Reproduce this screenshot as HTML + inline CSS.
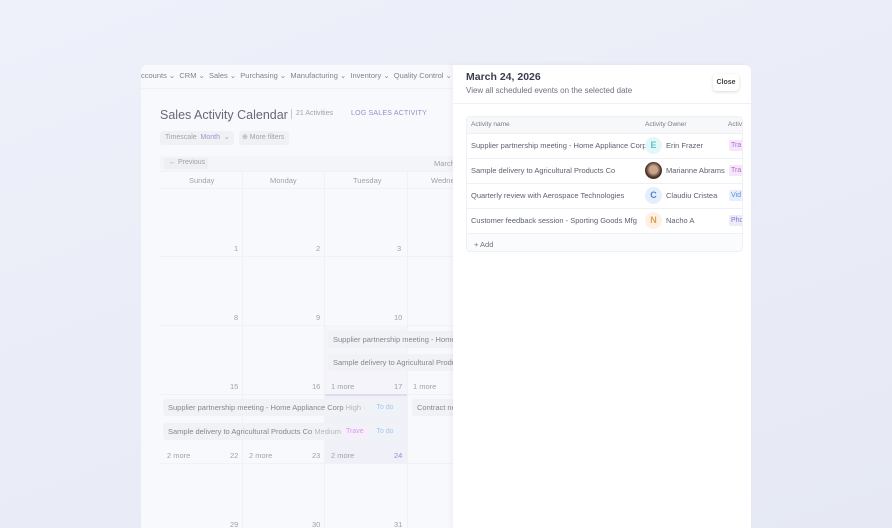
<!DOCTYPE html>
<html><head><meta charset="utf-8"><style>
*{margin:0;padding:0;box-sizing:border-box}
body{width:892px;height:528px;overflow:hidden;background:linear-gradient(160deg,#eef0fa,#e6e9f4);font-family:"Liberation Sans",sans-serif;position:relative}
.a{position:absolute;white-space:nowrap}
.app{position:absolute;left:141px;top:65px;width:320px;height:463px;background:#f8f9fc;border-radius:6px 0 0 0;overflow:hidden}
.nav{font-size:7.5px;color:#80838e}
.t{color:#a0a2ab;font-size:7.5px}
.ev{position:absolute;background:#f1f2f6;border-radius:3px;font-size:7.5px;color:#85878f;padding:0 5px;height:17px;line-height:17px;white-space:nowrap;overflow:hidden}
.drawer{position:absolute;left:453px;top:65px;width:298px;height:463px;background:#fff;border-radius:0 6px 0 0;box-shadow:-2px 0 5px rgba(120,125,150,.08)}
.row{position:absolute;left:0;width:277px;height:25px;border-top:1px solid #eef0f4;font-size:7.5px;color:#5e6270}
.av{position:absolute;width:17px;height:17px;border-radius:50%;text-align:center;line-height:17px;font-size:9px;font-weight:bold}
.tag{position:absolute;left:262px;top:6px;width:20px;height:11px;border-radius:2px;font-size:7px;line-height:11px;padding-left:2px}
</style></head><body>
<div class="app">
 <div class="a nav" style="left:0;top:6px">ccounts ⌄ &nbsp;CRM ⌄ &nbsp;Sales ⌄ &nbsp;Purchasing ⌄ &nbsp;Manufacturing ⌄ &nbsp;Inventory ⌄ &nbsp;Quality Control ⌄</div>
 <div class="a" style="left:0;top:23px;width:320px;border-top:1px solid #f1f2f6"></div>
 <div class="a" style="left:19px;top:43px;font-size:12.5px;color:#666a76">Sales Activity Calendar</div>
 <div class="a" style="left:150px;top:44px;height:10px;border-left:1px solid #c8cad3"></div>
 <div class="a t" style="left:155px;top:45px;font-size:7px">21 Activities</div>
 <div class="a" style="left:210px;top:45px;font-size:7px;color:#8f92c6;letter-spacing:.2px">LOG SALES ACTIVITY</div>
 <div class="a" style="left:19px;top:66px;width:74px;height:14px;background:#f0f1f5;border-radius:3px"></div>
 <div class="a t" style="left:24px;top:68px;font-size:7px">Timescale &nbsp;<span style="color:#9a97cf">Month</span> &nbsp;⌄</div>
 <div class="a" style="left:98px;top:66px;width:50px;height:14px;background:#f0f1f5;border-radius:3px"></div>
 <div class="a t" style="left:101px;top:68px;font-size:7px">⊕ More filters</div>
 <div class="a" style="left:19px;top:91px;width:301px;height:15px;background:#f4f5f8"></div>
 <div class="a" style="left:23px;top:93px;width:44px;height:11px;background:#eeeff3;border-radius:2px"></div>
 <div class="a t" style="left:28px;top:94px;font-size:7px">← Previous</div>
 <div class="a t" style="left:293px;top:94px">March</div>
 <div class="a t" style="left:48px;top:111px">Sunday</div>
 <div class="a t" style="left:129px;top:111px">Monday</div>
 <div class="a t" style="left:212px;top:111px">Tuesday</div>
 <div class="a t" style="left:290px;top:111px">Wednes</div>
 <div class="a" style="left:19px;top:106px;width:301px;height:357px;border-top:1px solid #f1f2f6"></div>
 <div class="a" style="left:101px;top:106px;height:357px;border-left:1px solid #f0f1f5"></div>
 <div class="a" style="left:183px;top:106px;height:357px;border-left:1px solid #f0f1f5"></div>
 <div class="a" style="left:266px;top:106px;height:357px;border-left:1px solid #f0f1f5"></div>
 <div class="a" style="left:19px;top:123px;width:301px;border-top:1px solid #f1f2f6"></div>
 <div class="a" style="left:19px;top:191px;width:301px;border-top:1px solid #f1f2f6"></div>
 <div class="a" style="left:19px;top:260px;width:301px;border-top:1px solid #f1f2f6"></div>
 <div class="a" style="left:19px;top:329px;width:301px;border-top:1px solid #f1f2f6"></div>
 <div class="a" style="left:19px;top:398px;width:301px;border-top:1px solid #f1f2f6"></div>
 <div class="a" style="left:184px;top:260px;width:82px;height:69px;background:#f4f4fa"></div>
 <div class="a" style="left:184px;top:329px;width:82px;height:2px;background:#dddcf1"></div>
 <div class="a" style="left:184px;top:331px;width:82px;height:67px;background:#f0f0f9"></div>
 <div class="a t" style="left:93px;top:179px">1</div><div class="a t" style="left:175px;top:179px">2</div><div class="a t" style="left:256px;top:179px">3</div>
 <div class="a t" style="left:93px;top:248px">8</div><div class="a t" style="left:175px;top:248px">9</div><div class="a t" style="left:253px;top:248px">10</div>
 <div class="a t" style="left:89px;top:317px">15</div><div class="a t" style="left:171px;top:317px">16</div><div class="a t" style="left:253px;top:317px">17</div>
 <div class="a t" style="left:190px;top:317px">1 more</div><div class="a t" style="left:272px;top:317px">1 more</div>
 <div class="a t" style="left:89px;top:386px">22</div><div class="a t" style="left:171px;top:386px">23</div><div class="a" style="left:253px;top:386px;font-size:7.5px;color:#8f8dd0">24</div>
 <div class="a t" style="left:26px;top:386px">2 more</div><div class="a t" style="left:108px;top:386px">2 more</div><div class="a t" style="left:190px;top:386px">2 more</div>
 <div class="a t" style="left:89px;top:455px">29</div><div class="a t" style="left:171px;top:455px">30</div><div class="a t" style="left:253px;top:455px">31</div>
 <div class="ev" style="left:187px;top:266px;width:133px">Supplier partnership meeting - Home Appliance Corp</div>
 <div class="ev" style="left:187px;top:289px;width:133px">Sample delivery to Agricultural Products Co</div>
 <div class="ev" style="left:22px;top:334px;width:237px">Supplier partnership meeting - Home Appliance Corp <span style="color:#b5b7c0">High ·</span></div>
 <div class="a" style="left:229px;top:337px;width:30px;height:11px;background:#eef3fa;border-radius:2px;font-size:7px;color:#a9c4e6;text-align:center;line-height:11px">To do</div>
 <div class="ev" style="left:22px;top:358px;width:237px">Sample delivery to Agricultural Products Co <span style="color:#b5b7c0">Medium ·</span></div>
 <div class="a" style="left:203px;top:361px;width:25px;height:11px;background:#f6eefa;font-size:7px;color:#d29be6;line-height:11px;padding-left:2px">Trave</div>
 <div class="a" style="left:229px;top:361px;width:30px;height:11px;background:#eef3fa;border-radius:2px;font-size:7px;color:#a9c4e6;text-align:center;line-height:11px">To do</div>
 <div class="ev" style="left:271px;top:334px;width:49px">Contract ne</div>
 <div class="ev" style="left:22px;top:468px;width:158px">Contract negotiation with Industrial Supply Co</div>
</div>
<div class="drawer">
 <div class="a" style="left:13px;top:6px;font-size:10.5px;font-weight:bold;color:#3a3d4d">March 24, 2026</div>
 <div class="a" style="left:13px;top:21px;font-size:8px;color:#6e7282">View all scheduled events on the selected date</div>
 <div class="a" style="left:260px;top:9px;width:26px;height:17px;border-radius:4px;box-shadow:0 1px 3px rgba(0,0,0,.15);font-size:7px;font-weight:bold;color:#444;text-align:center;line-height:17px">Close</div>
 <div class="a" style="left:0;top:38px;width:298px;border-top:1px solid #eef0f4"></div>
 <div class="a" style="left:13px;top:51px;width:277px;height:136px;border:1px solid #eef0f4;border-radius:4px;overflow:hidden;background:#fafbfc">
  <div class="a" style="left:0;top:0;width:277px;height:16px;background:#f7f8fa;font-size:6.5px;color:#777b88"><span class="a" style="left:4px;top:4px">Activity name</span><span class="a" style="left:178px;top:4px">Activity Owner</span><span class="a" style="left:261px;top:4px">Activ</span></div>
  <div class="row" style="top:16px;background:#fff"><span class="a" style="left:4px;top:7px">Supplier partnership meeting - Home Appliance Corp</span><div class="av" style="left:178px;top:3px;background:#e4f7f8;color:#5cc4c8">E</div><span class="a" style="left:199px;top:7px">Erin Frazer</span><div class="tag" style="background:#f5e6fb;color:#b36ad0">Tra</div></div>
  <div class="row" style="top:41px;background:#fff"><span class="a" style="left:4px;top:7px">Sample delivery to Agricultural Products Co</span><div class="av" style="left:178px;top:3px;background:radial-gradient(circle at 50% 45%,#c9a58c 30%,#4a3428 60%)"></div><span class="a" style="left:199px;top:7px">Marianne Abrams</span><div class="tag" style="background:#f5e6fb;color:#b36ad0">Tra</div></div>
  <div class="row" style="top:66px;background:#fff"><span class="a" style="left:4px;top:7px">Quarterly review with Aerospace Technologies</span><div class="av" style="left:178px;top:3px;background:#e5effc;color:#4b7fd1">C</div><span class="a" style="left:199px;top:7px">Claudiu Cristea</span><div class="tag" style="background:#e6f0fd;color:#5b8fd8">Vid</div></div>
  <div class="row" style="top:91px;background:#fff"><span class="a" style="left:4px;top:7px">Customer feedback session - Sporting Goods Mfg</span><div class="av" style="left:178px;top:3px;background:#fdf1e3;color:#e0a050">N</div><span class="a" style="left:199px;top:7px">Nacho A</span><div class="tag" style="background:#ecebfb;color:#7c78cf">Pho</div></div>
  <div class="row" style="top:116px;color:#6e7282"><span class="a" style="left:7px;top:6px">+ Add</span></div>
 </div>
</div>
</body></html>
